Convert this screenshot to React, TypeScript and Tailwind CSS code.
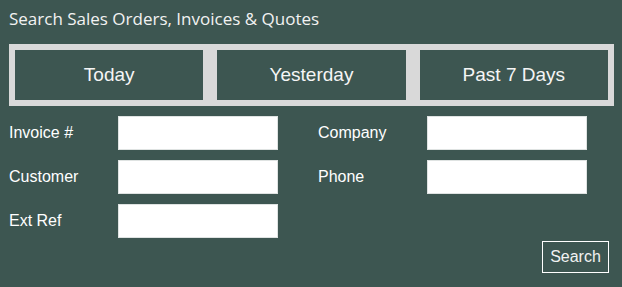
export default function App() {
  const left = ["Invoice #", "Customer", "Ext Ref"];
  const right = ["Company", "Phone"];

  return (
    <div className="w-[622px] h-[287px] bg-[#3d5651] text-white overflow-hidden">
      {/* Title */}
      <h1 className="pl-[9px] pt-[6px] h-[44px] text-[17px] leading-[26px] font-normal text-[#f2f2f2] [font-family:'Open_Sans',sans-serif]">
        Search Sales Orders, Invoices &amp; Quotes
      </h1>

      {/* Quick date range */}
      <div className="ml-[9px] w-[605px] h-[62px] bg-[#d9d9d9] p-[6px] flex gap-[14px]">
        {["Today", "Yesterday", "Past 7 Days"].map((label) => (
          <button
            key={label}
            className="flex-1 bg-[#3d5651] text-[19px] text-[#f5f5f5] [font-family:'Liberation_Sans',Arial,sans-serif]"
          >
            {label}
          </button>
        ))}
      </div>

      {/* Fields */}
      <div className="mt-[10px] pl-[9px] flex gap-[40px] text-[16px] [font-family:'Liberation_Sans',Arial,sans-serif]">
        <div className="flex flex-col gap-[10px]">
          {left.map((label) => (
            <label key={label} className="flex items-center h-[34px]">
              <span className="w-[109px]">{label}</span>
              <input className="w-[160px] h-[34px] bg-white border border-[#dfe3e2] outline-none text-black px-2" />
            </label>
          ))}
        </div>
        <div className="flex flex-col gap-[10px]">
          {right.map((label) => (
            <label key={label} className="flex items-center h-[34px]">
              <span className="w-[109px]">{label}</span>
              <input className="w-[160px] h-[34px] bg-white border border-[#dfe3e2] outline-none text-black px-2" />
            </label>
          ))}
        </div>
      </div>

      <div className="flex justify-end pr-[13px] mt-[3px]">
        <button className="w-[67px] h-[32px] border border-white text-[16px] text-[#f2f2f2] [font-family:'Liberation_Sans',Arial,sans-serif]">
          Search
        </button>
      </div>
    </div>
  );
}
